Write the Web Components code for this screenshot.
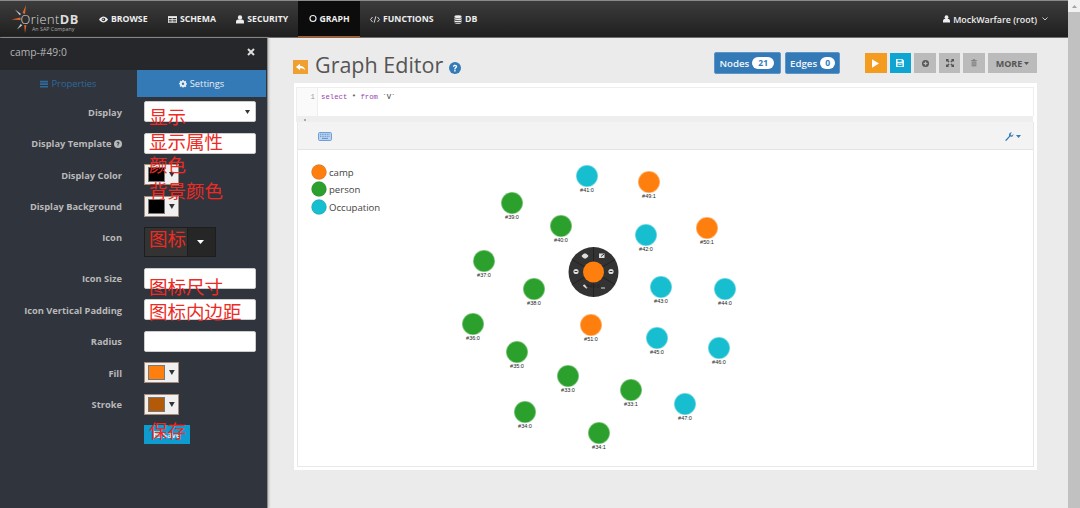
<!DOCTYPE html>
<html>
<head>
<meta charset="utf-8">
<title>Graph Editor</title>
<style>
  html, body { margin: 0; height: 508px; overflow: hidden; background: #ebebeb; }
  body { font-family: "Open Sans", "Noto Sans CJK SC", sans-serif; }
</style>
</head>
<body>
<od-app></od-app>

<script>
const icons = {
  eye: '<path d="M0 5c2-3 4.500-4 6-4s4 1 6 4c-2 3-4.500 4-6 4S2 8 0 5z" fill="currentColor"/><circle cx="6" cy="5" r="2.400" fill="#333"/><circle cx="5.500" cy="4.500" r="1" fill="currentColor"/>',
  table: '<path d="M0 1h12v9H0z" fill="currentColor"/><path d="M1 3.500h4v1.200H1zM6 3.500h5v1.200H6zM1 5.800h4V7H1zM6 5.800h5V7H6zM1 8h4v1H1zM6 8h5v1H6z" fill="#333"/>',
  user: '<circle cx="5" cy="3" r="2.700" fill="currentColor"/><path d="M0 10.500V8c0-1.600 1.400-2.500 2.500-2.500h5C8.600 5.500 10 6.400 10 8v2.500z" fill="currentColor"/>',
  ring: '<circle cx="5" cy="5" r="3.800" fill="none" stroke="currentColor" stroke-width="1.400"/>',
  code: '<path d="M3.500 2L.8 5.500l2.700 3.500M10.500 2l2.700 3.500L10.500 9M8.200 1L5.800 10" fill="none" stroke="currentColor" stroke-width="1.200"/>',
  db: '<ellipse cx="5" cy="2" rx="4.500" ry="1.800" fill="currentColor"/><path d="M.5 3.400c1 1.500 8 1.500 9 0v1.800c-1 1.500-8 1.500-9 0zM.5 6.100c1 1.500 8 1.500 9 0v1.800c-1 1.500-8 1.500-9 0zM.5 8.800c1 1.500 8 1.500 9 0v.7c-1 1.800-8 1.800-9 0z" fill="currentColor"/>',
  bars: '<path d="M0 1h10v2H0zM0 4.200h10v2H0zM0 7.400h10v2H0z" fill="currentColor"/>',
  cog: '<path d="M4 0h2l.3 1.500 1.100.5L8.700 1.200l1.400 1.400-.8 1.300.5 1.100L11 5v2l-1.200.3-.5 1.100.8 1.300-1.400 1.400-1.300-.8-1.100.5L6 11.500H4l-.3-1.200-1.100-.5-1.300.8L-.1 9.200l.8-1.300-.5-1.100L-1 6.500v-2l1.200-.3.5-1.100-.8-1.300L1.300 1.200l1.300.8 1.100-.5z" transform="translate(1 0) scale(.9)" fill="currentColor"/><circle cx="5.500" cy="5.200" r="1.700" fill="#337ab7"/>',
  help: '<circle cx="6" cy="6" r="6" fill="currentColor"/><path d="M3.900 4.700C4 3.400 4.900 2.800 6 2.800c1.300 0 2.200.8 2.200 1.800 0 1.500-1.700 1.500-1.700 2.800H5.200c0-1.900 1.600-2 1.600-2.800 0-.4-.3-.7-.8-.7s-.8.300-.9.800z" fill="var(--glyph, #fff)"/><path d="M5.200 8.100h1.400v1.300H5.200z" fill="var(--glyph, #fff)"/>',
  back: '<path d="M1 5.500L5.500 2v2.300c3.500 0 5.500 1.700 5.500 5-1-1.700-2.800-2.300-5.500-2.300V9z" fill="currentColor"/>',
  play: '<path d="M0 0l9 5.500L0 11z" fill="currentColor"/>',
  save: '<path d="M0 0h8l2 2v8H0z" fill="currentColor"/><path d="M2 1h5v2.500H2z" fill="#0ea5d2"/><path d="M2 5.500h6V9H2z" fill="#0ea5d2"/><path d="M3 6.500h4v1H3z" fill="currentColor"/>',
  plus: '<circle cx="5" cy="5" r="5" fill="currentColor"/><path d="M2.200 4.100h5.600v1.800H2.200z" fill="#bbb"/><path d="M4.100 2.200h1.800v5.600H4.100z" fill="#bbb"/>',
  expand: '<path d="M0 0h3.800L2.600 1.200 4.500 3.100 3.100 4.500 1.200 2.600 0 3.800zM10 0v3.800L8.800 2.600 6.900 4.500 5.500 3.100 7.400 1.200 6.200 0zM0 10V6.200l1.200 1.200 1.900-1.900 1.400 1.400-1.900 1.900L3.800 10zM10 10H6.200l1.200-1.200-1.900-1.900 1.400-1.400 1.900 1.900L10 6.200z" fill="currentColor"/>',
  trash: '<path d="M3 0h3l.5 1.200H9v1.300H0V1.200h2.500z" fill="currentColor"/><path d="M1 3.200h7V10.500H1z" fill="currentColor"/><path d="M2.500 4.500h1v4.800h-1zM5.500 4.500h1v4.800h-1z" fill="#bbb"/>',
  wrench: '<path d="M.5 10.500l5-5.200C5 3.500 5.500 1.800 7 1c.8-.4 1.700-.4 2.300-.2L7.500 2.700l.4 1.500 1.500.4 1.800-1.800c.2 1-.1 2-.9 2.700-1 .9-2.200 1-3.300.6L2 11.500c-.7.500-2 0-1.500-1z" fill="currentColor"/>',
  keyboard: '<rect x=".5" y=".5" width="13" height="8" rx="1.200" fill="#bcd3ee" stroke="#6f9fd6"/><path d="M2 2.300h10M2 4.300h10" stroke="#5d8fcc" stroke-dasharray="1 .7"/><path d="M4 6.400h6" stroke="#5d8fcc"/>'
};

function icon(name, w, h, box) {
  return `<svg width="${w}" height="${h}" viewBox="${box}" style="flex:none">${icons[name]}</svg>`;
}

class OdNavItem extends HTMLElement {
  constructor() {
    super();
    this.attachShadow({ mode: "open" });
    const name = this.getAttribute("icon");
    const box = this.getAttribute("box") || "0 0 12 11";
    const w = this.getAttribute("w") || 9;
    this.shadowRoot.innerHTML = `
      <style>
        :host { display: flex; align-items: center; gap: 3px; height: 100%; padding: 0 10.200px; box-sizing: border-box;
          color: #eee; font-size: 8.700px; font-weight: 700; }
        :host([active]) { background: #0c0c0c; border-bottom: 1.500px solid #c2570f; }
      </style>
      ${icon(name, w, 9, box)}<slot></slot>`;
  }
}
customElements.define("od-nav-item", OdNavItem);

class OdNavbar extends HTMLElement {
  constructor() {
    super();
    this.attachShadow({ mode: "open" });
    this.shadowRoot.innerHTML = `
      <style>
        :host { display: flex; align-items: stretch; height: 38px; box-sizing: border-box;
          border-top: 1px solid #8a8a8a; border-bottom: 1px solid #6e6e6e;
          background: linear-gradient(#3c3c3c, #1f1f1f); }
        .logo { width: 88.800px; flex: none; position: relative; color: #ddd; }
        .logo svg { position: absolute; left: 0; top: 0; }
        .name { position: absolute; left: 20.500px; top: 11px; font-size: 12.800px; font-weight: 300; letter-spacing: .45px; line-height: 14px; }
        .name b { font-weight: 700; }
        .sub { position: absolute; left: 32px; top: 25px; font-size: 5.300px; color: #aaa; line-height: 7px; }
        nav { display: flex; height: 36px; }
        .user { margin-left: auto; margin-right: 20px; display: flex; align-items: center; gap: 3px; color: #eee; font-size: 8.900px; font-weight: 600; }
        .user svg:last-child { margin-left: 2px; }
      </style>
      <div class="logo">
        <svg width="30" height="36" viewBox="0 0 30 36">
          <path d="M26 4l-1 9-2.500-1z" fill="#e2682a"/>
          <path d="M11.500 18.500l9-2v2.500z" fill="#e2682a"/>
          <path d="M25 32l-.8-8 2.200.3z" fill="#e2682a"/>
          <path d="M15 8.500l6 4.500-1.300 1.300z" fill="#ccc"/>
          <path d="M17 28.500l3.700-5.500 1.600 1.200z" fill="#ccc"/>
        </svg>
        <div class="name">Orient<b>DB</b></div>
        <div class="sub">An SAP Company</div>
      </div>
      <nav>
        <od-nav-item icon="eye" box="0 0 12 10">BROWSE</od-nav-item>
        <od-nav-item icon="table" box="0 0 12 11">SCHEMA</od-nav-item>
        <od-nav-item icon="user" box="0 0 10 11" w="8">SECURITY</od-nav-item>
        <od-nav-item icon="ring" box="0 0 10 10" w="8" active>GRAPH</od-nav-item>
        <od-nav-item icon="code" box="0 0 14 11" w="10">FUNCTIONS</od-nav-item>
        <od-nav-item icon="db" box="0 0 10 11" w="8">DB</od-nav-item>
      </nav>
      <div class="user">
        ${icon("user", 7, 8, "0 0 10 11")}<span>MockWarfare (root)</span>
        <svg width="6" height="4" viewBox="0 0 6 4"><path d="M.5.500L3 3 5.500.500" fill="none" stroke="#ccc"/></svg>
      </div>`;
  }
}
customElements.define("od-navbar", OdNavbar);

// one row of the settings form: label on the left, control in the slot, optional handwritten note over it
class OdField extends HTMLElement {
  constructor() {
    super();
    this.attachShadow({ mode: "open" });
    const note = this.getAttribute("note");
    this.shadowRoot.innerHTML = `
      <style>
        :host { display: grid; grid-template-columns: 122px 1fr; column-gap: 22px; align-items: center; }
        :host([top]) { align-items: start; }
        :host([top]) .label { padding-top: 4px; }
        .label { text-align: right; color: #b9b9b9; font-size: 9.300px; font-weight: 700; white-space: nowrap; padding-top: 1px; }
        .control { position: relative; display: flex; min-height: 21px; }
        .note { position: absolute; left: 5px; top: var(--note-top, 0); color: #ee2a24; font: 18.500px/22px "Noto Sans CJK SC", sans-serif; white-space: nowrap; }
      </style>
      <div class="label"><slot name="label">${this.getAttribute("label") || ""}</slot></div>
      <div class="control"><slot></slot>${note ? `<span class="note">${note}</span>` : ""}</div>`;
  }
}
customElements.define("od-field", OdField);

class OdSwatch extends HTMLElement {
  constructor() {
    super();
    this.attachShadow({ mode: "open" });
    this.shadowRoot.innerHTML = `
      <style>
        :host { display: flex; align-items: center; width: 35px; height: 21px; box-sizing: border-box; padding: 0 3px;
          background: #f0f0f0; border: 1px solid #a68c78; }
        .c { width: 18px; height: 15px; box-sizing: border-box; border: 1px solid #777; background: var(--c); }
        svg { margin-left: 4px; }
      </style>
      <div class="c"></div>
      <svg width="6" height="5" viewBox="0 0 6 5"><path d="M0 0h6L3 5z" fill="#333"/></svg>`;
    this.style.setProperty("--c", this.getAttribute("color"));
  }
}
customElements.define("od-swatch", OdSwatch);

class OdInput extends HTMLElement {
  constructor() {
    super();
    this.attachShadow({ mode: "open" });
    const select = this.hasAttribute("select");
    this.shadowRoot.innerHTML = `
      <style>
        :host { display: flex; align-items: center; justify-content: flex-end; width: 112px; height: 21px; box-sizing: border-box;
          padding-right: 5px; background: #fff; border-radius: 2px; border: 1px solid #ccc; }
      </style>
      ${select ? '<svg width="5" height="4" viewBox="0 0 5 4"><path d="M0 0h5L2.500 4z" fill="#333"/></svg>' : ""}`;
  }
}
customElements.define("od-input", OdInput);

class OdIconPicker extends HTMLElement {
  constructor() {
    super();
    this.attachShadow({ mode: "open" });
    this.shadowRoot.innerHTML = `
      <style>
        :host { display: flex; width: 72px; height: 30px; box-sizing: border-box; border: 1px solid #1e1e1e; background: #262626; }
        .l { width: 42px; background: #333; border-right: 1px solid #1e1e1e; }
        .r { flex: 1; display: flex; align-items: center; justify-content: center; padding-right: 2px; }
      </style>
      <div class="l"></div>
      <div class="r"><svg width="7" height="4" viewBox="0 0 7 4"><path d="M0 0h7L3.500 4z" fill="#fff"/></svg></div>`;
  }
}
customElements.define("od-icon-picker", OdIconPicker);

class OdSidebar extends HTMLElement {
  constructor() {
    super();
    this.attachShadow({ mode: "open" });
    this.shadowRoot.innerHTML = `
      <style>
        :host { display: flex; flex-direction: column; width: 268px; flex: none; box-sizing: border-box; background: #30343c;
          border-right: 1px solid #8d8d8d; box-shadow: 1px 0 2px #bbb; z-index: 1; }
        header { display: flex; align-items: center; justify-content: space-between; height: 32px; flex: none; box-sizing: border-box;
          padding: 0 12.500px 4px 10px; background: #25272a; color: #b5b5b5; font-size: 10.300px; }
        .tabs { display: grid; grid-template-columns: 137px 129px; height: 27px; flex: none; font-size: 9.300px; }
        .tab { display: flex; align-items: center; justify-content: center; gap: 3px; color: #2f6a9e; }
        .tab.on { background: #337ab7; color: #e8eef4; }
        form { display: flex; flex-direction: column; gap: 10.500px; padding-top: 4px; }
        .save { display: flex; align-items: center; justify-content: center; gap: 2px; width: 46px; height: 19px; background: #0d9bd0; color: #e8f4fa; font-size: 8px; font-weight: 600; }
        .help { --glyph: #30343c; color: #b9b9b9; vertical-align: -1px; }
      </style>
      <header>
        <span>camp-#49:0</span>
        <svg width="8" height="8" viewBox="0 0 8 8"><path d="M1 1l6 6M7 1L1 7" stroke="#ddd" stroke-width="2"/></svg>
      </header>
      <div class="tabs">
        <div class="tab">${icon("bars", 8, 8, "0 0 10 10")}Properties</div>
        <div class="tab on">${icon("cog", 8, 8, "0 0 11 11")}Settings</div>
      </div>
      <form>
        <od-field label="Display" note="显示" style="--note-top:4px"><od-input select></od-input></od-field>
        <od-field note="显示属性" style="--note-top:-3px">
          <span slot="label">Display Template <svg class="help" width="8" height="8" viewBox="0 0 12 12">${icons.help}</svg></span>
          <od-input></od-input>
        </od-field>
        <od-field label="Display Color" note="颜色" style="--note-top:-11px"><od-swatch color="#000"></od-swatch></od-field>
        <od-field label="Display Background" note="背景颜色" style="--note-top:-17px"><od-swatch color="#000"></od-swatch></od-field>
        <od-field top label="Icon" note="图标" style="--note-top:0"><od-icon-picker></od-icon-picker></od-field>
        <od-field label="Icon Size" note="图标尺寸" style="--note-top:7px"><od-input></od-input></od-field>
        <od-field label="Icon Vertical Padding" note="图标内边距" style="--note-top:.5px"><od-input></od-input></od-field>
        <od-field label="Radius"><od-input></od-input></od-field>
        <od-field label="Fill"><od-swatch color="#ff7f0e"></od-swatch></od-field>
        <od-field label="Stroke"><od-swatch color="#b25a0a"></od-swatch></od-field>
        <od-field note="保存" style="--note-top:-6px"><div class="save">${icon("save", 7, 7, "0 0 10 10")}Save</div></od-field>
      </form>`;
  }
}
customElements.define("od-sidebar", OdSidebar);

class OdGraph extends HTMLElement {
  constructor() {
    super();
    this.attachShadow({ mode: "open" });
    const colors = { camp: "#ff7f0e", person: "#2ca02c", occupation: "#17becf" };
    const nodes = [
      ["occupation", 587, 176, "#41:0"], ["camp", 649, 182, "#49:1"], ["person", 512, 203, "#39:0"],
      ["person", 561, 226, "#40:0"], ["occupation", 646, 235, "#42:0"], ["camp", 707, 228, "#50:1"],
      ["person", 484, 261, "#37:0"], ["person", 534, 289, "#38:0"], ["occupation", 661, 287, "#43:0"],
      ["occupation", 725, 289, "#44:0"], ["person", 473, 324, "#36:0"], ["camp", 591, 325, "#51:0"],
      ["occupation", 657, 338, "#45:0"], ["occupation", 719, 348, "#46:0"], ["person", 517, 352, "#35:0"],
      ["person", 568, 376, "#33:0"], ["person", 631, 390, "#33:1"], ["occupation", 685, 404, "#47:0"],
      ["person", 525, 412, "#34:0"], ["person", 599, 433, "#34:1"]
    ];
    const legend = [["camp", "camp", 172], ["person", "person", 189], ["occupation", "Occupation", 207]];
    const spokes = [-90, -30, 30, 90, 150, 210].map(a => {
      const r = a * Math.PI / 180;
      return `<line x1="593.500" y1="272" x2="${593.5 + 25 * Math.cos(r)}" y2="${272 + 25 * Math.sin(r)}" stroke="#222"/>`;
    }).join("");
    const gear = (x, y) => `<circle cx="${x}" cy="${y}" r="2.600" fill="#ddd"/><path d="M${x - 1.4} ${y}h2.800" stroke="#333"/>`;
    this.shadowRoot.innerHTML = `
      <style>
        :host { display: block; flex: 1; min-height: 0; }
        svg { display: block; width: 100%; height: 100%; }
        .lbl { font: 5.500px "Liberation Sans", sans-serif; fill: #222; text-anchor: middle; }
        .lg { font: 9.600px "Open Sans", sans-serif; fill: #444; }
        .n { stroke: #fff; stroke-opacity: .4; stroke-width: 1.500; }
      </style>
      <svg viewBox="298 150 735 316">
        ${legend.map(([k, t, y]) => `<circle cx="319" cy="${y}" r="7.500" fill="${colors[k]}" stroke="#000" stroke-opacity=".12"/>
          <text class="lg" x="329" y="${y + 3.5}">${t}</text>`).join("")}
        ${nodes.map(([k, x, y, t]) => `<circle class="n" cx="${x}" cy="${y}" r="11" fill="${colors[k]}"/>
          <text class="lbl" x="${x}" y="${y + 16}">${t}</text>`).join("")}
        <circle cx="593.500" cy="272" r="25" fill="#333"/>
        ${spokes}
        <path d="M581.500 256c1.500-2 2.500-2.500 3.500-2.500s2 .5 3.500 2.500c-1.500 2-2.500 2.500-3.500 2.500s-2-.5-3.500-2.500z" fill="#ddd"/>
        <g transform="translate(599 253.500)"><rect width="5.500" height="4.500" fill="#ddd"/><path d="M2 3L5 .500" stroke="#333"/></g>
        ${gear(611, 271.500)}
        ${gear(576, 271.500)}
        <path d="M601 288h4" stroke="#ddd"/>
        <path d="M583.500 285l3.500 3" stroke="#ddd" stroke-width="2"/>
        <circle cx="593.500" cy="272" r="10.500" fill="#ff7f0e"/>
        <text class="lbl" x="593" y="288">#49:0</text>
      </svg>`;
  }
}
customElements.define("od-graph", OdGraph);

class OdEditor extends HTMLElement {
  constructor() {
    super();
    this.attachShadow({ mode: "open" });
    this.shadowRoot.innerHTML = `
      <style>
        :host { display: flex; flex-direction: column; flex: 1; min-height: 0; box-sizing: border-box; background: #fff; padding: 4px 3px 3px 2px; }
        .code { display: flex; height: 29px; flex: none; box-sizing: border-box; border: 1px solid #eee; border-bottom: 0;
          font: 7.300px/19px "Liberation Mono", monospace; color: #333; }
        .gutter { width: 21px; flex: none; box-sizing: border-box; padding-right: 2px; text-align: right; color: #999; background: #fafafa; border-right: 1px solid #eee; }
        .src { padding-left: 3px; white-space: pre; }
        .kw { color: #9a3fb0; }
        .strip { height: 6px; flex: none; background: #eee; position: relative; margin-right: 1px; }
        .strip i { position: absolute; left: 8px; top: 3px; width: 2px; height: 2px; background: #aaa; }
        .frame { display: flex; flex-direction: column; flex: 1; min-height: 0; margin-left: 1px; border: solid #e8e8e8; border-width: 0 1px 1px; }
        .tools { display: flex; align-items: center; justify-content: space-between; height: 28px; flex: none; box-sizing: border-box;
          padding: 1px 12px 0 20px; background: #f3f3f3; border-bottom: 1px solid #e4e4e4; color: #337ab7; }
        .w { display: flex; align-items: center; gap: 2px; }
      </style>
      <div class="code">
        <div class="gutter">1</div>
        <div class="src"><span class="kw">select</span> * <span class="kw">from</span> \`V\`</div>
      </div>
      <div class="strip"><i></i></div>
      <div class="frame">
        <div class="tools">
          ${icon("keyboard", 14, 9, "0 0 14 9")}
          <span class="w">${icon("wrench", 9, 9, "0 0 12 12")}<svg width="5" height="3" viewBox="0 0 5 3"><path d="M0 0h5L2.500 3z" fill="currentColor"/></svg></span>
        </div>
        <od-graph></od-graph>
      </div>`;
  }
}
customElements.define("od-editor", OdEditor);

class OdMain extends HTMLElement {
  constructor() {
    super();
    this.attachShadow({ mode: "open" });
    const btn = (bg, fg, name, w, h, box) => `<div class="tb" style="background:${bg};color:${fg}">${icon(name, w, h, box)}</div>`;
    this.shadowRoot.innerHTML = `
      <style>
        :host { display: flex; flex-direction: column; flex: 1; min-width: 0; box-sizing: border-box; padding: 14px 31px 38px 26px; background: #ebebeb; }
        .head { display: flex; align-items: center; height: 31px; flex: none; }
        .back { display: flex; align-items: center; justify-content: center; width: 15px; height: 14px; background: #f0a030; color: #fff; margin: -1px 7px 0 -1px; }
        h1 { margin: -7px 0 0; font-size: 21.500px; font-weight: 400; color: #555; line-height: 31px; }
        .q { color: #337ab7; margin: 0 0 0 6px; display: flex; }
        .pills { margin-left: auto; display: flex; gap: 4px; margin-top: -9px; margin-right: 25px; }
        .pill { display: flex; align-items: center; gap: 3px; height: 22px; box-sizing: border-box; padding: 0 4px; background: #337ab7; border: 1px solid #5b95c9; border-radius: 2px; color: #f2f6fa; font-size: 9.700px; font-weight: 600; }
        .pill b { background: #fff; color: #337ab7; font-size: 8.500px; font-weight: 700; border-radius: 7px; padding: 0 5px; line-height: 12px; }
        .bar { display: flex; gap: 3px; margin-top: -9px; }
        .tb { display: flex; align-items: center; justify-content: center; width: 21.600px; height: 20px; }
        .more { width: 49px; background: #bbb; color: #555; font-size: 9px; font-weight: 700; gap: 2px; }
      </style>
      <div class="head">
        <div class="back">${icon("back", 11, 10, "0 0 12 11")}</div>
        <h1>Graph Editor</h1>
        <div class="q">${icon("help", 12, 12, "0 0 12 12")}</div>
        <div class="pills">
          <div class="pill" style="padding-right:6px">Nodes <b style="padding:0 6px">21</b></div>
          <div class="pill">Edges <b>0</b></div>
        </div>
        <div class="bar">
          ${btn("#f39c1f", "#fff", "play", 7, 9, "0 0 9 11")}
          ${btn("#0ea5d2", "#eaf6fb", "save", 8, 8, "0 0 10 10")}
          ${btn("#bbb", "#555", "plus", 7, 7, "0 0 10 10")}
          ${btn("#bbb", "#555", "expand", 8, 8, "0 0 10 10")}
          ${btn("#bbb", "#808080", "trash", 6, 8, "0 0 9 11")}
          <div class="tb more">MORE<svg width="5" height="3" viewBox="0 0 5 3"><path d="M0 0h5L2.500 3z" fill="#555"/></svg></div>
        </div>
      </div>
      <od-editor></od-editor>`;
  }
}
customElements.define("od-main", OdMain);

class OdScrollbar extends HTMLElement {
  constructor() {
    super();
    this.attachShadow({ mode: "open" });
    this.shadowRoot.innerHTML = `
      <style>
        :host { display: flex; flex-direction: column; width: 12px; flex: none; background: #f1f1f1; }
        .up { height: 12px; display: flex; align-items: center; justify-content: center; }
        .thumb { flex: 1; background: #c1c1c1; }
      </style>
      <div class="up"><svg width="5" height="3" viewBox="0 0 5 3"><path d="M0 3h5L2.500 0z" fill="#a3a3a3"/></svg></div>
      <div class="thumb"></div>`;
  }
}
customElements.define("od-scrollbar", OdScrollbar);

class OdApp extends HTMLElement {
  constructor() {
    super();
    this.attachShadow({ mode: "open" });
    this.shadowRoot.innerHTML = `
      <style>
        :host { display: flex; width: 1080px; height: 508px; }
        .page { display: flex; flex-direction: column; flex: 1; min-width: 0; }
        .body { display: flex; flex: 1; min-height: 0; }
      </style>
      <div class="page">
        <od-navbar></od-navbar>
        <div class="body">
          <od-sidebar></od-sidebar>
          <od-main></od-main>
        </div>
      </div>
      <od-scrollbar></od-scrollbar>`;
  }
}
customElements.define("od-app", OdApp);
</script>
</body>
</html>
